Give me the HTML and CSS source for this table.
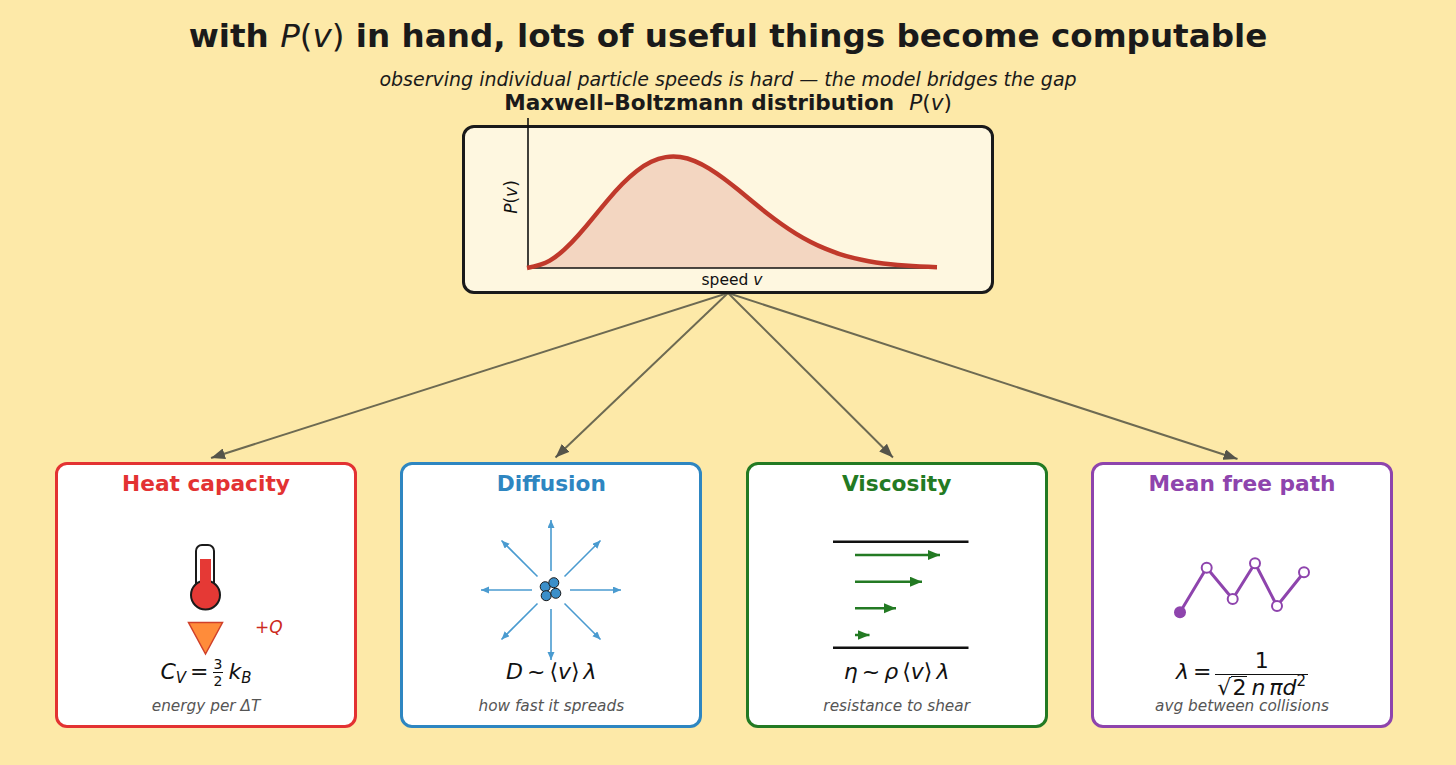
FILE: index.html
```html
<!DOCTYPE html>
<html lang="en">
<head>
<meta charset="utf-8">
<title>with P(v) in hand</title>
<link rel="stylesheet" href="styles.css">
</head>
<body>
<div class="page">
  <h1 class="title">with <span class="m"><i>P</i>(<i>v</i>)</span> in hand, lots of useful things become computable</h1>
  <p class="subtitle">observing individual particle speeds is hard — the model bridges the gap</p>
  <h2 class="chart-title">Maxwell–Boltzmann distribution&nbsp; <span class="m"><i>P</i>(<i>v</i>)</span></h2>
  <div class="chart-box">
    <svg class="chart" width="526" height="163" viewBox="465 128 526 163">
      <path fill="#f3d6c1" d="M 528,268 Q 542.5,265 549.75,260.65 Q 557,256.3 564.25,249.65 Q 571.5,243 578.75,234.75 Q 586,226.5 593.25,217.6 Q 600.5,208.7 607.75,200.1 Q 615,191.5 622.25,184.05 Q 629.5,176.6 636.75,170.95 Q 644,165.3 651.25,161.8 Q 658.5,158.3 665.75,157.15 Q 673,156 680.25,157.05 Q 687.5,158.1 694.75,161.1 Q 702,164.1 709.25,168.6 Q 716.5,173.1 723.75,178.5 Q 731,183.9 738.25,189.85 Q 745.5,195.8 752.75,201.8 Q 760,207.8 767.25,213.45 Q 774.5,219.1 781.75,224.25 Q 789,229.4 796.25,233.85 Q 803.5,238.3 810.75,242 Q 818,245.7 825.25,248.7 Q 832.5,251.7 839.75,254.05 Q 847,256.4 854.25,258.15 Q 861.5,259.9 868.75,261.2 Q 876,262.5 883.25,263.4 Q 890.5,264.3 897.75,264.95 Q 905,265.6 912.25,266.05 Q 919.5,266.5 928.25,266.85 L 937,267.2 L 937,268 Z"/>
      <line x1="528" y1="118" x2="528" y2="268" stroke="#111" stroke-width="1.6"/>
      <line x1="528" y1="268" x2="937" y2="268" stroke="#111" stroke-width="1.6"/>
      <path fill="none" stroke="#c0392b" stroke-width="4.5" stroke-linejoin="round" d="M 527,268 Q 542.5,265 549.75,260.65 Q 557,256.3 564.25,249.65 Q 571.5,243 578.75,234.75 Q 586,226.5 593.25,217.6 Q 600.5,208.7 607.75,200.1 Q 615,191.5 622.25,184.05 Q 629.5,176.6 636.75,170.95 Q 644,165.3 651.25,161.8 Q 658.5,158.3 665.75,157.15 Q 673,156 680.25,157.05 Q 687.5,158.1 694.75,161.1 Q 702,164.1 709.25,168.6 Q 716.5,173.1 723.75,178.5 Q 731,183.9 738.25,189.85 Q 745.5,195.8 752.75,201.8 Q 760,207.8 767.25,213.45 Q 774.5,219.1 781.75,224.25 Q 789,229.4 796.25,233.85 Q 803.5,238.3 810.75,242 Q 818,245.7 825.25,248.7 Q 832.5,251.7 839.75,254.05 Q 847,256.4 854.25,258.15 Q 861.5,259.9 868.75,261.2 Q 876,262.5 883.25,263.4 Q 890.5,264.3 897.75,264.95 Q 905,265.6 912.25,266.05 Q 919.5,266.5 928.25,266.85 L 937,267.2"/>
      <text class="axis-label" x="732" y="285" text-anchor="middle">speed <tspan font-style="italic">v</tspan></text>
      <text class="axis-label big" transform="translate(517,197) rotate(-90)" text-anchor="middle"><tspan font-style="italic">P</tspan>(<tspan font-style="italic">v</tspan>)</text>
    </svg>
  </div>
  <svg class="links" width="1456" height="168" viewBox="0 294 1456 168">
    <defs>
      <marker id="head" markerUnits="userSpaceOnUse" markerWidth="15" markerHeight="11" refX="14" refY="5.5" orient="auto">
        <path d="M0,0 L14,5.5 L0,11 z" fill="#55544a"/>
      </marker>
    </defs>
    <g stroke="#6d6a52" stroke-width="2" fill="none" marker-end="url(#head)">
      <line x1="728" y1="293" x2="211" y2="458"/>
      <line x1="728" y1="293" x2="555.5" y2="457.5"/>
      <line x1="728" y1="293" x2="893" y2="457.5"/>
      <line x1="728" y1="293" x2="1237.5" y2="459"/>
    </g>
  </svg>
  <div class="cards">
    <div class="card red">
      <div class="card-title">Heat capacity</div>
      <svg class="icon" width="296" height="161" viewBox="0 0 296 161">
        <rect x="138" y="49" width="18" height="52" rx="6" fill="#fff" stroke="#1a1a1a" stroke-width="2"/>
        <circle cx="147.5" cy="99" r="14.5" fill="#e53935" stroke="#1a1a1a" stroke-width="2"/>
        <rect x="142" y="63" width="11" height="38" fill="#e53935"/>
        <polygon points="130.5,126.5 164.5,126.5 147.5,158" fill="#ff8c3a" stroke="#d0402a" stroke-width="1.5" stroke-linejoin="miter"/>
        <text class="plusq" x="197" y="137">+Q</text>
      </svg>
      <div class="formula"><span><i>C</i><sub><i>V</i></sub></span><span class="mo">=</span><span class="frac small"><span class="num">3</span><span class="den">2</span></span><span class="sp"><i>k</i><sub><i>B</i></sub></span></div>
      <div class="caption">energy per ΔT</div>
    </div>
    <div class="card blue">
      <div class="card-title">Diffusion</div>
      <svg class="icon" width="296" height="161" viewBox="0 0 296 161">
        <defs>
          <marker id="bh" markerUnits="userSpaceOnUse" markerWidth="9" markerHeight="8" refX="8" refY="3.5" orient="auto">
            <path d="M0,0 L8,3.5 L0,7 z" fill="#4a9bd0"/>
          </marker>
        </defs>
        <g stroke="#4a9bd0" stroke-width="1.6" marker-end="url(#bh)">
          <line x1="148" y1="75" x2="148" y2="24"/>
          <line x1="148" y1="113" x2="148" y2="164"/>
          <line x1="129" y1="94" x2="78" y2="94"/>
          <line x1="167" y1="94" x2="218" y2="94"/>
          <line x1="134.5" y1="80.5" x2="98.5" y2="44.5"/>
          <line x1="161.5" y1="80.5" x2="197.5" y2="44.5"/>
          <line x1="134.5" y1="107.5" x2="98.5" y2="143.5"/>
          <line x1="161.5" y1="107.5" x2="197.5" y2="143.5"/>
        </g>
        <g fill="#3b8fc9" stroke="#1a1a1a" stroke-width="1">
          <circle cx="142.2" cy="90.7" r="5"/>
          <circle cx="150.8" cy="86.7" r="5"/>
          <circle cx="143.2" cy="99.7" r="5"/>
          <circle cx="152.8" cy="97.3" r="5"/>
        </g>
      </svg>
      <div class="formula"><i>D</i><span class="mo">~</span><span>⟨</span><i>v</i><span>⟩</span><i class="sp">λ</i></div>
      <div class="caption">how fast it spreads</div>
    </div>
    <div class="card green">
      <div class="card-title">Viscosity</div>
      <svg class="icon" width="296" height="161" viewBox="0 0 296 161">
        <defs>
          <marker id="gh" markerUnits="userSpaceOnUse" markerWidth="13" markerHeight="11" refX="12" refY="5" orient="auto">
            <path d="M0,0 L12,5 L0,10 z" fill="#237a23"/>
          </marker>
        </defs>
        <line x1="84" y1="45.7" x2="219.5" y2="45.7" stroke="#111" stroke-width="2.5"/>
        <line x1="84" y1="151.7" x2="219.5" y2="151.7" stroke="#111" stroke-width="2.5"/>
        <g stroke="#237a23" stroke-width="2.5" marker-end="url(#gh)">
          <line x1="106" y1="59" x2="191" y2="59"/>
          <line x1="106" y1="85.7" x2="173" y2="85.7"/>
          <line x1="106" y1="112.3" x2="147" y2="112.3"/>
          <line x1="106" y1="139" x2="120.5" y2="139"/>
        </g>
      </svg>
      <div class="formula"><i>η</i><span class="mo">~</span><i>ρ</i><span class="sp">⟨</span><i>v</i><span>⟩</span><i class="sp">λ</i></div>
      <div class="caption">resistance to shear</div>
    </div>
    <div class="card purple">
      <div class="card-title">Mean free path</div>
      <svg class="icon" width="296" height="161" viewBox="0 0 296 161">
        <polyline points="86,116.3 112.7,71.7 138.7,103 161,67.3 183,110 210,76.3" fill="none" stroke="#8e44ad" stroke-width="3" stroke-linejoin="round"/>
        <circle cx="86" cy="116.3" r="6" fill="#8e44ad"/>
        <g fill="#fff" stroke="#8e44ad" stroke-width="2">
          <circle cx="112.7" cy="71.7" r="5"/>
          <circle cx="138.7" cy="103" r="5"/>
          <circle cx="161" cy="67.3" r="5"/>
          <circle cx="183" cy="110" r="5"/>
          <circle cx="210" cy="76.3" r="5"/>
        </g>
      </svg>
      <div class="formula"><i>λ</i><span class="mo">=</span><span class="frac big"><span class="num">1</span><span class="den"><span class="rad">√</span><span class="radarg">2</span><i class="sp">n</i><i class="sp">π</i><span><i>d</i><sup>2</sup></span></span></span></div>
      <div class="caption">avg between collisions</div>
    </div>
  </div>
</div>
</body>
</html>
```

FILE: styles.css
```css
* { box-sizing: border-box; }

body {
  margin: 0;
  background: #fde9a8;
  font-family: "DejaVu Sans", "Noto Sans", sans-serif;
  color: #1a1a1a;
}

.page {
  width: 1456px;
  height: 765px;
  display: flex;
  flex-direction: column;
  align-items: center;
  overflow: hidden;
}

.m { font-weight: normal; }
.m i, .formula i { font-style: italic; }

.title {
  margin: 17px 0 0;
  font-size: 32.6px;
  line-height: 38px;
  font-weight: bold;
  white-space: nowrap;
}

.subtitle {
  margin: 13px 0 0;
  font-size: 19px;
  line-height: 22px;
  font-style: italic;
  white-space: nowrap;
}

.chart-title {
  margin: 1px 0 0;
  font-size: 21.6px;
  line-height: 24px;
  font-weight: bold;
  white-space: pre;
}

.chart-box {
  margin-top: 10px;
  width: 532px;
  height: 169px;
  border: 3px solid #1a1a1a;
  border-radius: 12px;
  background: #fef7e0;
}

.chart { display: block; overflow: visible; }

.axis-label {
  font-family: "DejaVu Sans", sans-serif;
  font-size: 15.5px;
  fill: #111;
}
.axis-label.big { font-size: 17px; }

.links { display: block; flex: none; }

.cards {
  align-self: stretch;
  display: flex;
  gap: 43.33px;
  padding-left: 55px;
}

.card {
  width: 302px;
  height: 266px;
  border: 3px solid;
  border-radius: 12px;
  background: #fff;
  display: flex;
  flex-direction: column;
  align-items: center;
}

.card.red { border-color: #e33232; color: #e33232; }
.card.blue { border-color: #2e86c1; color: #2e86c1; }
.card.green { border-color: #237a23; color: #237a23; }
.card.purple { border-color: #8e44ad; color: #8e44ad; }

.card-title {
  margin-top: 7px;
  font-size: 21.7px;
  line-height: 24px;
  font-weight: bold;
}

.icon { display: block; flex: none; overflow: visible; }

.plusq {
  font-family: "DejaVu Sans", sans-serif;
  font-style: italic;
  font-size: 17px;
  fill: #cc2a1e;
}

.formula {
  height: 30px;
  display: flex;
  align-items: center;
  justify-content: center;
  font-size: 22px;
  line-height: 30px;
  color: #111;
  white-space: nowrap;
}

.formula sub {
  font-size: 15px;
  line-height: 0;
  vertical-align: -4px;
}

.formula sup {
  font-size: 15px;
  line-height: 0;
  vertical-align: 9px;
}

.formula .mo { margin: 0 4px; }
.formula .sp { margin-left: 4px; }

.frac {
  display: inline-flex;
  flex-direction: column;
  align-items: center;
}

.frac.small {
  font-size: 14px;
  line-height: 14px;
  margin-right: 1px;
}
.frac.small .num { padding: 0 1px 1px; }
.frac.small .den { border-top: 1.2px solid #111; padding: 1px 1px 0; width: 100%; text-align: center; }

.frac.big { line-height: 25px; margin-top: 4px; }
.frac.big .num { padding-bottom: 1px; }
.frac.big .den {
  border-top: 1.2px solid #111;
  padding: 0 2px;
  display: flex;
  align-items: baseline;
}

.rad { font-size: 22px; }
.radarg { border-top: 1.2px solid #111; line-height: 21px; padding: 0 1px; }

.caption {
  margin-top: 10.5px;
  font-size: 15.3px;
  line-height: 17px;
  font-style: italic;
  color: #555;
}
```
